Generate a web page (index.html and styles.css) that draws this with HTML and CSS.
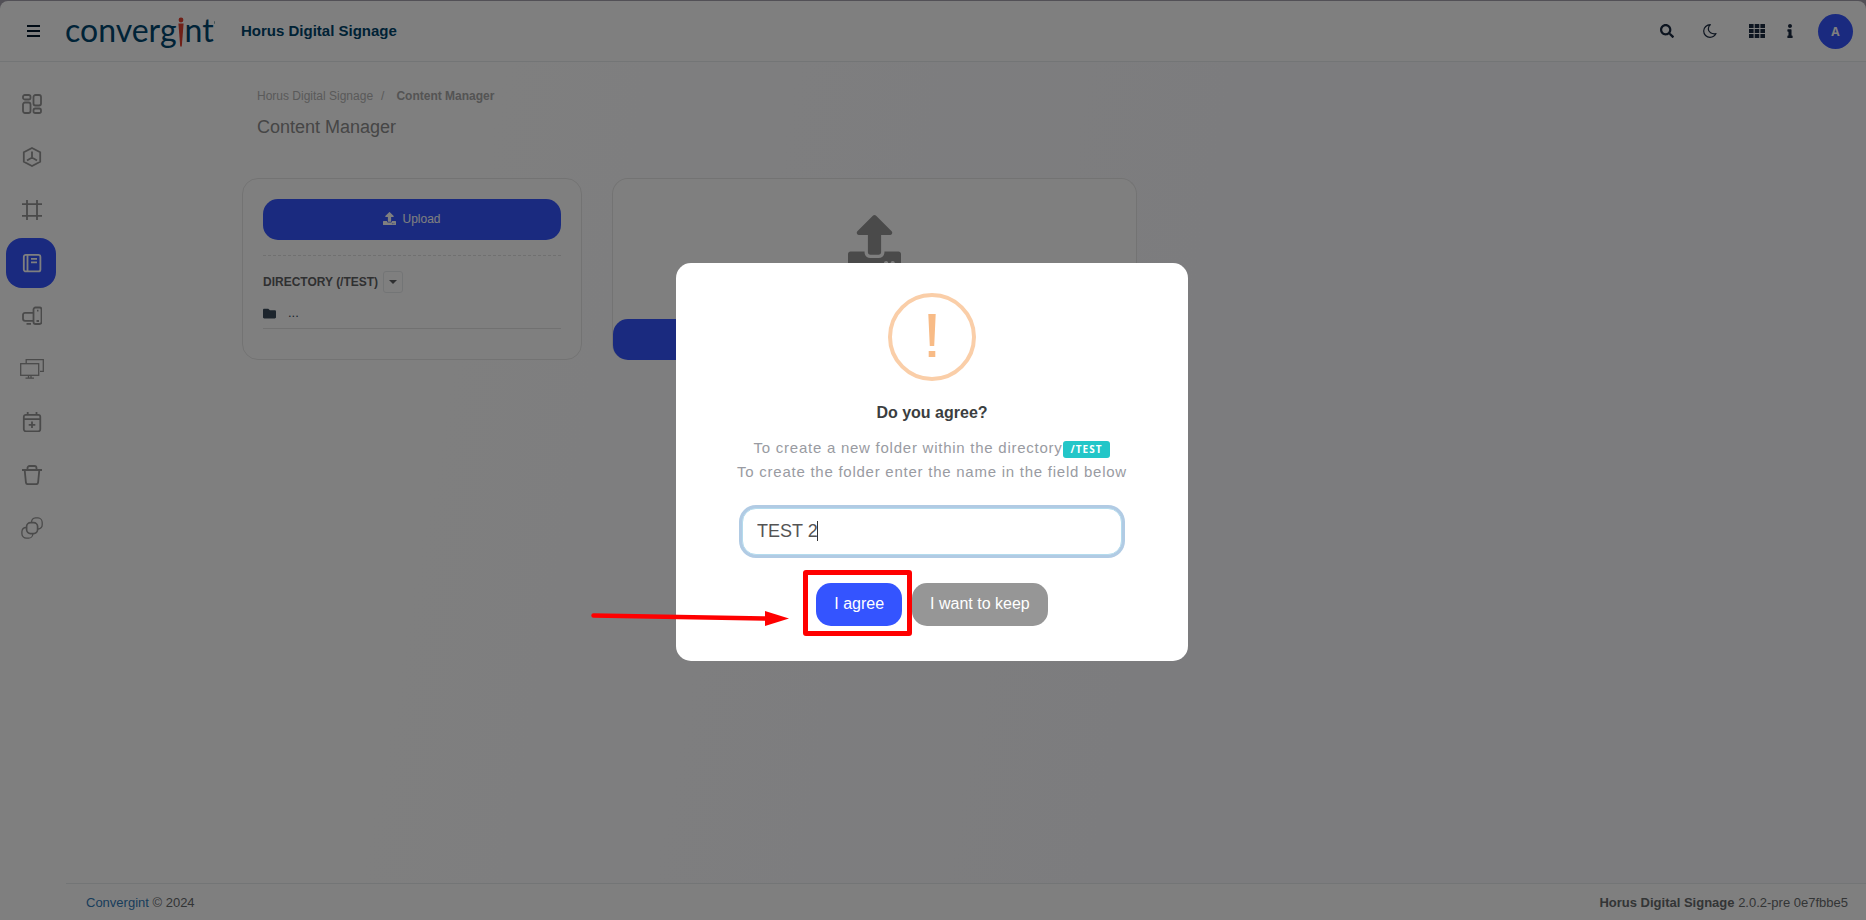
FILE: index.html
```html
<!DOCTYPE html>
<html lang="en">
<head>
<meta charset="utf-8">
<title>Horus Digital Signage - Content Manager</title>
<link rel="stylesheet" href="styles.css">
</head>
<body>
<svg class="sprite" aria-hidden="true">
  <symbol id="upload" viewBox="0 0 512 512"><path d="M296 384h-80c-13.3 0-24-10.7-24-24V192h-87.7c-17.8 0-26.7-21.5-14.1-34.1L242.3 5.7c7.5-7.5 19.8-7.5 27.3 0l152.2 152.2c12.6 12.6 3.7 34.1-14.1 34.1H320v168c0 13.3-10.7 24-24 24zm216-8v112c0 13.3-10.7 24-24 24H24c-13.3 0-24-10.7-24-24V376c0-13.3 10.7-24 24-24h136v8c0 30.9 25.1 56 56 56h80c30.9 0 56-25.1 56-56v-8h136c13.3 0 24 10.7 24 24zm-124 88c0-11-9-20-20-20s-20 9-20 20 9 20 20 20 20-9 20-20zm64 0c0-11-9-20-20-20s-20 9-20 20 9 20 20 20 20-9 20-20z"/></symbol>
</svg>
<div class="app">
  <header class="topbar">
    <button class="icon-btn menu" aria-label="Menu"><svg width="13" height="12" viewBox="0 0 13 12"><path d="M0 1h13M0 6h13M0 11h13" stroke="currentColor" stroke-width="2"/></svg></button>
    <a class="logo" href="#" aria-label="Convergint"><span>converg</span><svg class="logo-i" width="6" height="30" viewBox="0 0 6 30"><circle cx="3" cy="3" r="2.4"/><path d="M.4 6.500h5.200L3.800 29.500H2.200z"/></svg><span>nt</span><span class="logo-mark"></span></a>
    <strong class="product">Horus Digital Signage</strong>
    <nav class="tools">
      <button class="icon-btn" aria-label="Search"><svg width="14" height="14" viewBox="0 0 512 512"><path fill="currentColor" d="M505 442.700L405.300 343c-4.500-4.500-10.600-7-17-7H372c27.600-35.300 44-79.700 44-128C416 93.100 322.900 0 208 0S0 93.100 0 208s93.100 208 208 208c48.300 0 92.700-16.400 128-44v16.300c0 6.400 2.500 12.500 7 17l99.700 99.700c9.400 9.400 24.600 9.400 33.900 0l28.300-28.300c9.400-9.400 9.400-24.600.1-34zM208 336c-70.700 0-128-57.200-128-128 0-70.700 57.200-128 128-128 70.700 0 128 57.200 128 128 0 70.700-57.200 128-128 128z"/></svg></button>
      <button class="icon-btn moon" aria-label="Dark mode"><svg width="14" height="14" viewBox="0 0 14 14"><path d="M7.300.7C3.800.7.700 3.500.7 7s2.800 6.300 6.300 6.300c2.500 0 4.900-1.400 6-3.700-4.300.9-7.700-1.600-7.700-4.700 0-1.700.7-3.200 2-4.200z" fill="none" stroke="currentColor" stroke-width="1.200" stroke-linejoin="round"/></svg></button>
      <button class="icon-btn grid" aria-label="Apps"><svg width="16" height="14" viewBox="0 0 16 14"><path fill="currentColor" d="M0 0h4.600v4H0zM5.700 0h4.600v4H5.700zM11.400 0H16v4h-4.600zM0 5h4.600v4H0zM5.700 5h4.600v4H5.700zM11.400 5H16v4h-4.600zM0 10h4.600v4H0zM5.700 10h4.600v4H5.700zM11.400 10H16v4h-4.600z"/></svg></button>
      <button class="icon-btn info" aria-label="Information"><svg width="6" height="14" viewBox="0 0 192 512"><path fill="currentColor" d="M20 424.200h20V279.800H20c-11 0-20-9-20-20V212c0-11 9-20 20-20h112c11 0 20 9 20 20v212.200h20c11 0 20 9 20 20V492c0 11-9 20-20 20H20c-11 0-20-9-20-20v-47.800c0-11 9-20 20-20zM96 0C56.200 0 24 32.200 24 72s32.200 72 72 72 72-32.200 72-72S135.800 0 96 0z"/></svg></button>
      <button class="avatar">A</button>
    </nav>
  </header>
  <div class="body">
    <nav class="sidebar">
      <a href="#" aria-label="Dashboard"><svg viewBox="0 0 20 20"><rect x="1" y="1" width="7.500" height="4.500" rx="1.800"/><rect x="11.500" y="1" width="7.500" height="10.500" rx="2"/><rect x="1" y="8.500" width="7.500" height="10.500" rx="2"/><rect x="11.500" y="14.500" width="7.500" height="4.500" rx="1.800"/></svg></a>
      <a href="#" aria-label="Widgets"><svg viewBox="0 0 20 20"><path d="M10 1l8.200 4.300v9.400L10 19l-8.200-4.300V5.300zM10 4.500v6M10 10.500l-5 3M10 10.500l5 3"/></svg></a>
      <a href="#" aria-label="Layouts"><svg viewBox="0 0 20 20"><path d="M5 0v20M15 0v20M0 4.200h20M0 15.800h20"/></svg></a>
      <a href="#" class="active" aria-label="Content Manager"><svg viewBox="0 0 20 20"><rect x="1.800" y="1.800" width="16.600" height="16.600" rx="2"/><path d="M5.500 2v16M9 5.800h6M9 9.300h6"/></svg></a>
      <a href="#" aria-label="Devices"><svg viewBox="0 0 20 20"><rect x="11.500" y="1.500" width="8" height="16.500" rx="2"/><path d="M11 6.800H3a2 2 0 0 0-2 2v4a2 2 0 0 0 2 2h8M4.500 17.800H9M14.500 15h2.500M15 4.700h1.500"/></svg></a>
      <a href="#" aria-label="Screens"><svg class="wide" viewBox="0 0 24 20"><g stroke-width="1.300"><rect x=".7" y="4.700" width="18" height="11.600"/><path d="M6.200 4.500V.7h17.100v11.600H20M8.500 16.500v2.500M11 16.500v2.500M5.500 19.200h8.500"/></g></svg></a>
      <a href="#" aria-label="Schedule"><svg viewBox="0 0 20 20"><rect x="1.800" y="2.800" width="16.500" height="16.500" rx="2"/><path d="M2 7.200h16M5.700 0v2.500M14.500 0v2.500M10 9.500v6.600M6.700 12.800h6.600"/></svg></a>
      <a href="#" aria-label="Trash"><svg viewBox="0 0 20 20"><path d="M0 5h20M5.500 4.800V3a2 2 0 0 1 2-2h5a2 2 0 0 1 2 2v1.800M2.700 5.200l1.200 12.200a2 2 0 0 0 2 1.800h8.200a2 2 0 0 0 2-1.800L17.300 5.200"/></svg></a>
      <a href="#" aria-label="Groups"><svg class="wide" viewBox="0 0 22 22"><g stroke-width="1.300"><rect x="5.600" y="5.600" width="11" height="11" rx="4" stroke-width="1.700"/><path d="M10.500 5.200A4.500 4.500 0 0 1 14.500.9h2.500a4.500 4.500 0 0 1 4.200 4.500v2.400a4 4 0 0 1-4.200 4.200M5.200 10.500A4.500 4.500 0 0 0 .9 14.700v2a4.500 4.500 0 0 0 4.500 4.500h2.200a4.300 4.300 0 0 0 4.200-4.300"/></g></svg></a>
    </nav>
    <div class="page">
      <main>
        <nav class="crumbs"><a href="#">Horus Digital Signage</a><span>/</span><strong>Content Manager</strong></nav>
        <h1>Content Manager</h1>
        <div class="cards">
          <section class="card files">
            <button class="primary"><svg width="13" height="13"><use href="#upload"/></svg>Upload</button>
            <hr>
            <div class="dir"><h2>DIRECTORY (/TEST)</h2><button aria-label="Directory options"><svg width="8" height="4" viewBox="0 0 8 4"><path d="M0 0h8L4 4z" fill="currentColor"/></svg></button></div>
            <ul><li><svg width="13" height="13" viewBox="0 0 512 512"><path fill="currentColor" d="M464 128H272l-64-64H48C21.500 64 0 85.500 0 112v288c0 26.500 21.500 48 48 48h416c26.500 0 48-21.500 48-48V176c0-26.500-21.500-48-48-48z"/></svg><a href="#">...</a></li></ul>
          </section>
          <section class="card drop">
            <svg width="53" height="53"><use href="#upload"/></svg>
            <button class="primary" aria-label="Upload files"></button>
          </section>
        </div>
      </main>
      <footer><span><a href="#">Convergint</a> © 2024</span><span><strong>Horus Digital Signage</strong> 2.0.2-pre 0e7fbbe5</span></footer>
    </div>
  </div>
</div>
<div class="overlay">
  <div class="modal" role="dialog" aria-labelledby="ask">
    <svg class="warn" width="88" height="88" viewBox="0 0 88 88"><circle cx="44" cy="44" r="42" fill="none" stroke="#facea8" stroke-width="4"/><path fill="#f8bb86" d="M40.300 21h7.400l-1.500 32h-4.400zM40.700 58h6.600v6h-6.600z"/></svg>
    <h2 id="ask">Do you agree?</h2>
    <p><label for="folder">To create a new folder within the directory<span class="badge">/TEST</span><br>To create the folder enter the name in the field below</label></p>
    <div class="field"><input id="folder" type="text" value="TEST 2"><span class="caret"></span></div>
    <div class="actions"><button class="agree">I agree</button><button class="keep">I want to keep</button></div>
    <div class="mark"></div>
    <svg class="arrow" width="200" height="18" viewBox="0 0 200 18"><path d="M2.500 6.500L176 9.500" stroke="#f00" stroke-width="4.500" stroke-linecap="round"/><path d="M174 2l24 7.500L174 17z" fill="#f00"/></svg>
  </div>
</div>
</body>
</html>
```
FILE: styles.css
```css
* { box-sizing: border-box; }
body { margin: 0; background: #a4a0ac; color: #676a6c; font: 13px/20px "Liberation Sans", Arial, sans-serif; }
a { color: inherit; text-decoration: none; }
button { font: inherit; padding: 0; border: 0; background: none; color: inherit; }
h1, h2, p, ul { margin: 0; padding: 0; font-weight: normal; }
svg { display: block; flex: none; }
.sprite { position: absolute; width: 0; height: 0; }
.app { display: flex; flex-direction: column; min-height: 100vh; padding-top: 1px; }

.topbar { display: flex; align-items: center; height: 61px; padding: 0 13px 0 27px; background: #fff; border-bottom: 1px solid #e7eaec; border-radius: 8px 8px 0 0; }
.icon-btn { color: #1b2a41; }
.menu { color: #00172b; }
.logo { display: flex; width: 150px; margin-left: 25px; padding-bottom: 3px; color: #00466f; font: 32px/40px Lato, sans-serif; }
.logo-i { fill: #e0402f; margin: 7px 1px 0; }
.logo-mark { width: 3px; height: 3px; margin-top: 11px; border-radius: 50%; background: #8aa; }
.product { margin-left: 26px; color: #00446b; font-size: 15px; }
.tools { display: flex; align-items: center; margin-left: auto; }
.moon { margin-left: 29px; }
.grid { margin-left: 32px; }
.info { margin-left: 22px; }
.avatar { width: 35px; height: 35px; margin-left: 25px; border-radius: 50%; background: #3454ff; color: #fff; font: bold 12px "Open Sans", sans-serif; }

.body { display: flex; flex: 1; }
.sidebar { display: flex; flex-direction: column; align-items: center; gap: 3px; width: 66px; padding: 17px 4px 0 0; background: #fff; }
.sidebar a { display: grid; place-items: center; width: 50px; height: 50px; padding-left: 2px; border-radius: 16px; color: #959595; }
.sidebar svg { width: 20px; height: 20px; fill: none; stroke: currentColor; stroke-width: 1.8; }
.sidebar svg.wide { width: 24px; height: 22px; }
.sidebar .active { background: #3454ff; color: #fff; }

.page { display: flex; flex: 1; flex-direction: column; background: linear-gradient(100deg, #fff 0%, #fff 15%, #f9f9fd 60%); }
main { flex: 1; padding: 24px 176px 0; }
.crumbs { display: flex; padding: 0 15px; color: #b4b4b4; font-size: 12px; }
.crumbs span { margin: 0 12px 0 8px; }
.crumbs strong { color: #a8a8a8; }
h1 { margin: 9px 15px 0; color: #8c8c8c; font-size: 18px; line-height: 24px; }
.cards { display: grid; grid-template-columns: 340fr 525fr; gap: 30px; max-width: 895px; margin-top: 39px; }
.card { height: 182px; background: #fff; border: 1px solid #e7e7e7; border-radius: 16px; }
.files { padding: 20px; }
.primary { display: flex; align-items: center; justify-content: center; gap: 6px; width: 100%; height: 41px; padding-bottom: 2px; border-radius: 15px; background: #3454ff; color: #fff; font-size: 12px; }
.primary svg { fill: #fff; }
hr { margin: 15px 0; border: 0; border-top: 1px dashed #e0e0e0; }
.dir { display: flex; align-items: center; gap: 5px; color: #5f6163; }
.dir h2 { font-size: 12px; font-weight: bold; }
.dir button { display: grid; place-items: center; width: 20px; height: 22px; border: 1px solid #e7eaec; border-radius: 3px; }
ul { list-style: none; }
li { display: flex; align-items: center; gap: 12px; height: 36px; padding-top: 5px; border-bottom: 1px solid #e3e3e3; color: #3a4b5b; }
.drop { display: flex; flex-direction: column; align-items: center; justify-content: space-between; padding-top: 36px; border-bottom: 0; }
.drop > svg { fill: #959595; }
footer { display: flex; justify-content: space-between; height: 37px; padding: 9px 18px 0 20px; background: #fff; border-top: 1px solid #e7eaec; }
footer a { color: #337ab7; }

.overlay { position: fixed; inset: 0; display: flex; align-items: center; justify-content: center; padding: 3px 2px 0 0; background: rgba(0, 0, 0, .5); }
.modal { position: relative; display: flex; flex-direction: column; align-items: center; width: 512px; padding: 30px 20px 35px; background: #fff; border-radius: 15px; }
.modal h2 { margin-top: 22px; color: #3b3e40; font-size: 16px; font-weight: bold; line-height: 20px; }
.modal p { margin-top: 13px; color: #999ba2; font-size: 15px; line-height: 24px; letter-spacing: .05em; text-align: center; }
.badge { display: inline-block; height: 17px; padding: 0 8px; border-radius: 3px; background: #23c6c8; color: #fff; font: bold 10px/17px "Open Sans", sans-serif; letter-spacing: 1px; vertical-align: 0; }
.field { position: relative; margin-top: 24px; }
input { display: block; width: 380px; height: 47px; padding: 0 14px; border: 1px solid #b4dbed; border-radius: 14px; outline: 0; box-shadow: 0 0 0 3px #b1cbe4; color: #545454; font: 18px "Liberation Sans", Arial, sans-serif; }
.caret { position: absolute; left: 75px; top: 13px; width: 1px; height: 20px; background: #333; }
.actions { display: flex; gap: 10px; margin-top: 28px; }
.actions button { height: 43px; padding: 0 18px; border-radius: 15px; color: #fff; font-size: 16px; }
.agree { background: #3454ff; }
.keep { background: #969696; }
.mark { position: absolute; left: 127px; top: 307px; width: 109px; height: 66px; border: 5px solid #f00; border-radius: 3px; }
.arrow { position: absolute; left: -85px; top: 346px; }
```
